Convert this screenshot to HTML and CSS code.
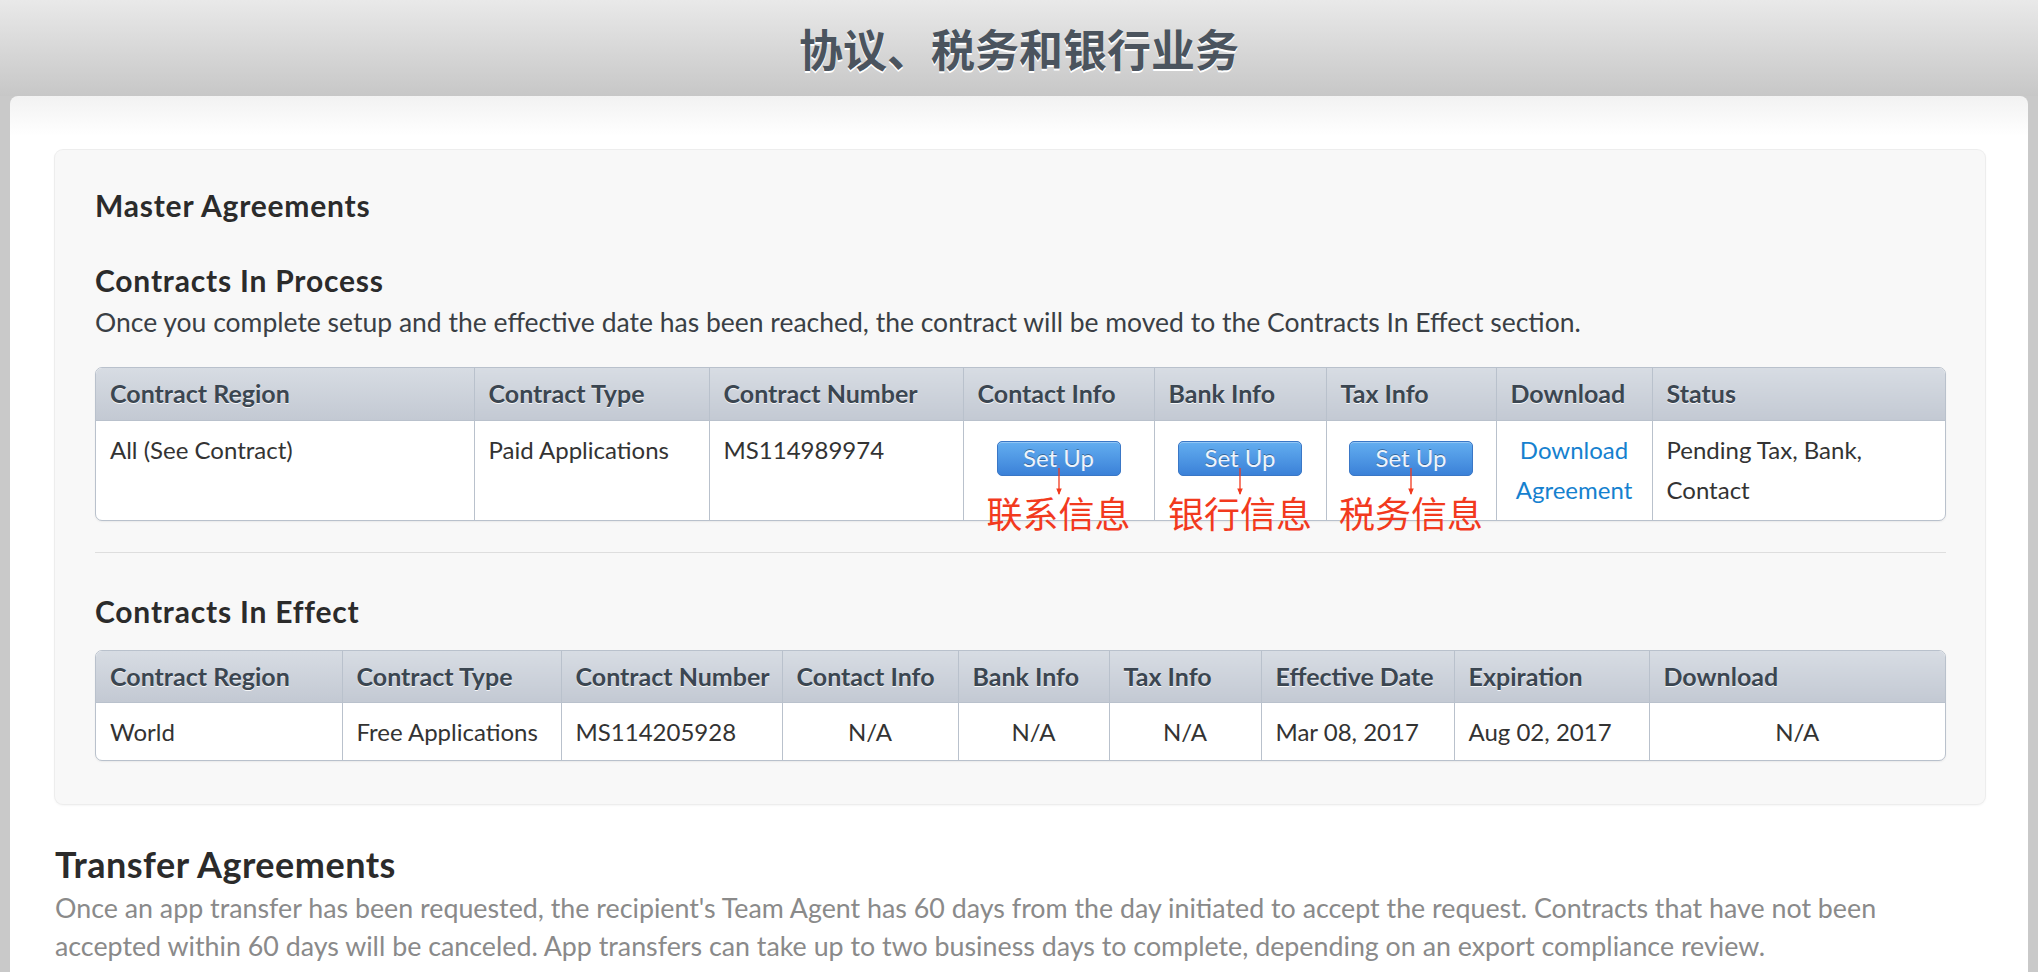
FILE: index.html
```html
<!DOCTYPE html>
<html lang="zh">
<head>
<meta charset="utf-8">
<title>协议、税务和银行业务</title>
<link rel="stylesheet" href="styles.css">
</head>
<body>
<header class="topbar">
  <h1>协议、税务和银行业务</h1>
</header>
<main class="card">
  <section class="panel">
    <h2 class="panel-title">Master Agreements</h2>
    <h3 class="sub-title">Contracts In Process</h3>
    <p class="desc">Once you complete setup and the effective date has been reached, the contract will be moved to the Contracts In Effect section.</p>
    <div class="tbl">
      <table class="t1">
        <colgroup>
          <col class="w1"><col class="w2"><col class="w3"><col class="w4"><col class="w5"><col class="w6"><col class="w7"><col class="w8">
        </colgroup>
        <thead>
          <tr>
            <th>Contract Region</th><th>Contract Type</th><th>Contract Number</th><th>Contact Info</th><th>Bank Info</th><th>Tax Info</th><th>Download</th><th>Status</th>
          </tr>
        </thead>
        <tbody>
          <tr>
            <td>All (See Contract)</td>
            <td>Paid Applications</td>
            <td>MS114989974</td>
            <td class="center btn-cell">
              <span class="btn">Set Up</span>
              <div class="note"><svg class="arrow" viewBox="0 0 10 28" width="10" height="28"><line x1="5" y1="0" x2="5" y2="26" stroke="#f23a1e" stroke-width="1.3"/><path d="M2.2 20.5 L5 27 L7.8 20.5 Z" fill="#f23a1e"/></svg><span class="note-text">联系信息</span></div>
            </td>
            <td class="center btn-cell">
              <span class="btn">Set Up</span>
              <div class="note"><svg class="arrow" viewBox="0 0 10 28" width="10" height="28"><line x1="5" y1="0" x2="5" y2="26" stroke="#f23a1e" stroke-width="1.3"/><path d="M2.2 20.5 L5 27 L7.8 20.5 Z" fill="#f23a1e"/></svg><span class="note-text">银行信息</span></div>
            </td>
            <td class="center btn-cell">
              <span class="btn">Set Up</span>
              <div class="note"><svg class="arrow" viewBox="0 0 10 28" width="10" height="28"><line x1="5" y1="0" x2="5" y2="26" stroke="#f23a1e" stroke-width="1.3"/><path d="M2.2 20.5 L5 27 L7.8 20.5 Z" fill="#f23a1e"/></svg><span class="note-text">税务信息</span></div>
            </td>
            <td class="center"><a class="link" href="#">Download<br>Agreement</a></td>
            <td>Pending Tax, Bank,<br>Contact</td>
          </tr>
        </tbody>
      </table>
    </div>
    <hr class="sep">
    <h3 class="sub-title effect">Contracts In Effect</h3>
    <div class="tbl tbl2">
      <table class="t2">
        <colgroup>
          <col class="w1"><col class="w2"><col class="w3"><col class="w4"><col class="w5"><col class="w6"><col class="w7"><col class="w8"><col class="w9">
        </colgroup>
        <thead>
          <tr>
            <th>Contract Region</th><th>Contract Type</th><th>Contract Number</th><th>Contact Info</th><th>Bank Info</th><th>Tax Info</th><th>Effective Date</th><th>Expiration</th><th>Download</th>
          </tr>
        </thead>
        <tbody>
          <tr>
            <td>World</td>
            <td>Free Applications</td>
            <td>MS114205928</td>
            <td class="center">N/A</td>
            <td class="center">N/A</td>
            <td class="center">N/A</td>
            <td>Mar 08, 2017</td>
            <td>Aug 02, 2017</td>
            <td class="center">N/A</td>
          </tr>
        </tbody>
      </table>
    </div>
  </section>
  <section class="transfer">
    <h2 class="transfer-title">Transfer Agreements</h2>
    <p class="transfer-text">Once an app transfer has been requested, the recipient's Team Agent has 60 days from the day initiated to accept the request. Contracts that have not been<br>accepted within 60 days will be canceled. App transfers can take up to two business days to complete, depending on an export compliance review.</p>
  </section>
</main>
</body>
</html>
```
FILE: styles.css
```css
* { box-sizing: border-box; }
html, body { margin: 0; padding: 0; }
body {
  background: #c9c9c9;
  font-family: Lato, "Noto Sans", sans-serif;
  color: #333;
  width: 2038px;
}
.topbar {
  height: 96px;
  background: linear-gradient(#e9e9e9, #c7c7c7);
  display: flex;
  align-items: center;
  justify-content: center;
}
.topbar h1 {
  margin: 0;
  font-family: "Noto Sans CJK SC", sans-serif;
  font-weight: 700;
  font-size: 44px;
  line-height: 1;
  color: #4b545e;
  text-shadow: 0 2px 0 #fff;
}
.card {
  margin: 0 10px;
  background: linear-gradient(#f2f2f2, #fff 40px);
  border-radius: 8px 8px 0 0;
  padding: 54px 43px 60px 45px;
  min-height: 876px;
}
.panel {
  background: #f8f8f8;
  border-radius: 8px;
  box-shadow: 0 0 0 1px #ededed, 0 1px 3px rgba(0, 0, 0, 0.08);
  padding: 36px 39px 43px 40px;
}
.panel-title, .sub-title {
  margin: 0;
  font-size: 30px;
  letter-spacing: 0.8px;
  line-height: 38px;
  font-weight: 700;
  color: #2b2b2b;
}
.sub-title { margin-top: 37px; }
.sub-title.effect { margin-top: 39px; }
.desc {
  margin: 4px 0 0;
  font-size: 26.5px;
  line-height: 38px;
  color: #3a3f45;
  white-space: nowrap;
}
.tbl {
  margin-top: 26px;
  border: 1px solid #b9c1cc;
  border-radius: 7px;
  background: #fff;
  box-shadow: 0 1px 2px rgba(0, 0, 0, 0.06);
}
.tbl2 { margin-top: 20px; }
table {
  width: 100%;
  border-collapse: collapse;
  table-layout: fixed;
}
th {
  height: 52px;
  padding: 5px 14px 6px;
  text-align: left;
  font-size: 25px;
  line-height: 40px;
  font-weight: 700;
  color: #3b4651;
  text-shadow: 0 1px 0 rgba(255, 255, 255, 0.85);
  background: linear-gradient(#d7dce3, #c3c9d3);
  border-bottom: 1px solid #b9c1cc;
  white-space: nowrap;
}
th:first-child { border-top-left-radius: 6px; }
th:last-child { border-top-right-radius: 6px; }
th + th, td + td { border-left: 1px solid #b9c1cc; }
td {
  padding: 9px 14px 10px;
  vertical-align: top;
  font-size: 24px;
  line-height: 40px;
  color: #333;
  white-space: nowrap;
}
.t2 td { padding: 9px 14px 8px; }
td.center { text-align: center; }
.btn-cell { position: relative; }
.btn {
  display: inline-block;
  margin-top: 11px;
  width: 124px;
  height: 35px;
  border: 1px solid #3a77c6;
  border-radius: 5px;
  background: linear-gradient(#63aef0, #3b81d8);
  box-shadow: inset 0 1px 0 rgba(255, 255, 255, 0.3);
  color: #eef4fb;
  text-shadow: 0 -1px 0 rgba(0, 0, 0, 0.35);
  font-size: 24px;
  line-height: 32px;
  text-align: center;
}
.note {
  position: absolute;
  left: 0;
  right: 0;
  top: 47px;
  display: flex;
  flex-direction: column;
  align-items: center;
  pointer-events: none;
}
.arrow { display: block; }
.note-text {
  margin-top: -4px;
  font-family: "Noto Sans CJK SC", sans-serif;
  font-size: 36px;
  line-height: 40px;
  color: #f23a1e;
  white-space: nowrap;
}
.link {
  color: #1581cf;
  text-decoration: none;
}
.t1 .w1 { width: 378px; }
.t1 .w2 { width: 235px; }
.t1 .w3 { width: 254px; }
.t1 .w4 { width: 191px; }
.t1 .w5 { width: 172px; }
.t1 .w6 { width: 170px; }
.t1 .w7 { width: 156px; }
.t1 .w8 { width: auto; }
.t2 .w1 { width: 246px; }
.t2 .w2 { width: 219px; }
.t2 .w3 { width: 221px; }
.t2 .w4 { width: 176px; }
.t2 .w5 { width: 151px; }
.t2 .w6 { width: 152px; }
.t2 .w7 { width: 193px; }
.t2 .w8 { width: 195px; }
.t2 .w9 { width: auto; }
.sep {
  margin: 31px 0 0;
  border: 0;
  border-top: 1px solid #dedede;
  height: 0;
}
.transfer { margin-top: 39px; }
.transfer-title {
  margin: 0;
  font-size: 36px;
  letter-spacing: 0.5px;
  line-height: 42px;
  font-weight: 700;
  color: #2b2b2b;
}
.transfer-text {
  margin: 4px 0 0;
  font-size: 26.8px;
  line-height: 38px;
  color: #8a8a8a;
  white-space: nowrap;
}
```
